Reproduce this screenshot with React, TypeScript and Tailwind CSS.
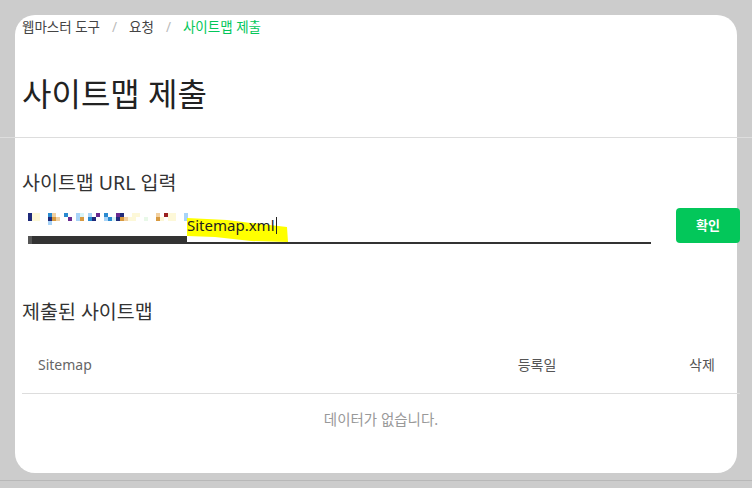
const font = { fontFamily: '"Noto Sans", "Noto Sans CJK KR", sans-serif' };

// censored url prefix, 4px blocks
const C: Record<string, string> = {
  N: '#1f2a7a',
  y: '#fdf8d8',
  B: '#2a8ad0',
  p: '#f2d0a0',
  l: '#a8d4f8',
  c: '#d8f4f8',
  P: '#6a2a90',
  o: '#d89a40',
  R: '#9a2020',
  g: '#e8f8e8',
};
const rows = [
  'Nyy..Bp..B..lc.l.P.B..PN..yy....p.Ryy..l',
  'Nyy..Nop..P.lo.BN..lBcNopyy..g..oy.yy..l',
  '.....l..................................',
];

function Mosaic() {
  return (
    <svg width="160" height="12" className="mt-[5px] block">
      {rows.flatMap((r, j) =>
        r.split('').map((ch, i) =>
          ch === '.' ? null : <rect key={`${j}-${i}`} x={i * 4} y={j * 4} width="4" height="4" fill={C[ch]} />
        )
      )}
    </svg>
  );
}

export default function App() {
  return (
    <div className="w-[752px] h-[488px] overflow-hidden bg-[#cccccc]" style={font}>
      <div className="ml-[15px] mt-[15px] w-[722px] h-[458px] rounded-[20px] bg-white">
        <div className="w-[725px] pl-[7px]">
          <nav className="h-6 leading-6 text-[13.5px] text-[#444] flex">
            <span>웹마스터 도구</span>
            <span className="px-[12px] text-[#bbb]">/</span>
            <span>요청</span>
            <span className="px-[12px] text-[#bbb]">/</span>
            <span className="text-[#03c75a]">사이트맵 제출</span>
          </nav>
          <h1 className="mt-[35px] leading-[40px] text-[32px] text-[#222]">사이트맵 제출</h1>
        </div>
        <div className="mt-[23px] -ml-[15px] w-[752px] h-px bg-[#dddddd]" />

        <div className="w-[725px] pl-[7px]">
          <h2 className="mt-[31px] leading-[28px] text-[19.5px] text-[#333]">사이트맵 URL 입력</h2>
          <div className="mt-[11px] flex h-9">
            <div className="ml-[6px] w-[159px] flex flex-col">
              <Mosaic />
              <div className="mt-auto h-2 bg-[#333] border-l-4 border-[#555]" />
            </div>
            <div className="relative w-[464px] border-b-2 border-[#333] pt-[7px]">
              <svg className="absolute left-0 top-0" width="110" height="36">
                <polygon points="0,10 40,12 64,15 100,19 101,34 64,33 28,29 0,28" fill="#ffff00" />
              </svg>
              <div className="relative leading-5 text-[15px] text-[#222] flex items-center">
                <span>Sitemap.xml</span>
                <span className="ml-px w-px h-[17px] bg-[#222]" />
              </div>
            </div>
            <button className="ml-[25px] w-16 h-[35px] rounded bg-[#03c75a] text-white text-[13px] font-bold">
              확인
            </button>
          </div>

          <h2 className="mt-[54px] leading-[28px] text-[19.5px] text-[#333]">제출된 사이트맵</h2>
          <div className="mt-[9px] flex h-[59px] items-center border-b border-[#dddddd] text-[14px] text-[#555]">
            <div className="flex-1 pl-4 text-[#666]">Sitemap</div>
            <div className="w-[254px] text-center">등록일</div>
            <div className="w-[76px] text-center">삭제</div>
          </div>
          <div className="h-[52px] flex items-center justify-center text-[14.5px] text-[#999]">
            데이터가 없습니다.
          </div>
        </div>
      </div>
      <div className="mt-[7px] h-px bg-[#b8b8b8]" />
    </div>
  );
}
